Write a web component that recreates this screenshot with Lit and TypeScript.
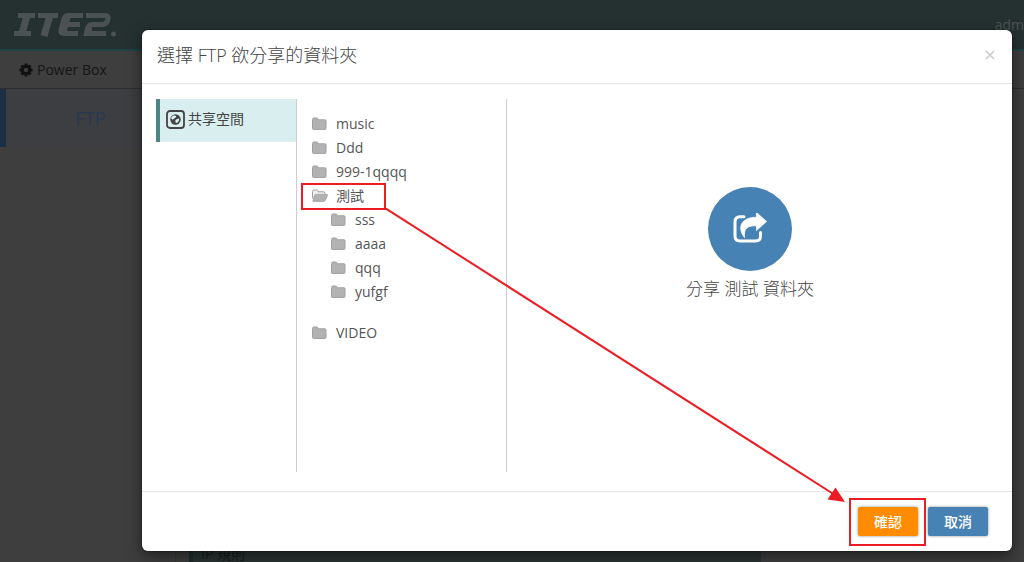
import { LitElement, html, css, svg, nothing } from "lit";
import { customElement, state } from "lit/decorators.js";
import { classMap } from "lit/directives/class-map.js";

interface Folder {
  name: string;
  children?: Folder[];
}

const FOLDERS: Folder[] = [
  { name: "music" },
  { name: "Ddd" },
  { name: "999-1qqqq" },
  {
    name: "測試",
    children: [{ name: "sss" }, { name: "aaaa" }, { name: "qqq" }, { name: "yufgf" }],
  },
  { name: "VIDEO" },
];

const closedFolder = svg`
  <path d="M0.5 3.5 Q0.5 2 2 2 H4.6 Q6 2 6 3.3 V3.8 H13 Q14 3.8 14 4.8 V12.4 Q14 13.4 13 13.4 H1.5 Q0.5 13.4 0.5 12.4 Z" fill="#b2b2b2" stroke="#a0a0a0"/>`;
const openFolder = svg`
  <path d="M0.5 10.5 V3.5 Q0.5 2 2 2 H4.6 Q6 2 6 3.3 V3.8 H11.8 Q12.8 3.8 12.8 4.8 V6" fill="#eee" stroke="#a0a0a0"/>
  <path d="M3.6 6.4 H15 Q16 6.4 15.5 7.4 L13.2 12.4 Q12.7 13.4 11.7 13.4 H1.6 Q0.6 13.4 1 12.4 L2.7 7.1 Q2.9 6.4 3.6 6.4 Z" fill="#b2b2b2" stroke="#a0a0a0" stroke-width="0.8"/>`;

@customElement("app-root")
export class AppRoot extends LitElement {
  @state() private selected = "測試";

  static styles = css`
    :host {
      display: block;
      position: relative;
      min-height: 100vh;
      overflow: hidden;
      background: #3e3e3e;
      color: #444;
      font-family: "Open Sans", "Noto Sans CJK TC", sans-serif;
      font-size: 14px;
    }
    * { box-sizing: border-box; }
    button {
      font: inherit;
      color: inherit;
      border: 0;
      background: none;
      padding: 0;
      cursor: pointer;
    }
    svg { display: block; flex: none; }
    .page {
      display: flex;
      flex-direction: column;
      height: 100vh;
    }
    .topbar {
      display: flex;
      justify-content: space-between;
      align-items: center;
      height: 51px;
      padding-left: 14px;
      background: #253131;
      border-bottom: 2px solid #1c4444;
    }
    .user {
      white-space: nowrap;
      color: #4c5252;
    }
    .crumbs {
      display: flex;
      align-items: center;
      gap: 4px;
      height: 38px;
      padding-left: 19px;
      border-bottom: 1px solid #2d2d2d;
      color: #151515;
    }
    .main { display: flex; flex: 1; }
    .nav {
      width: 176px;
      border-right: 1px solid #373737;
    }
    .nav-item {
      display: flex;
      align-items: center;
      justify-content: center;
      height: 58px;
      background: #3c3e41;
      border-left: 6px solid #1c2f43;
      color: #27394e;
      font-size: 18px;
      text-decoration: none;
    }
    .content {
      flex: 1;
      display: flex;
      align-items: flex-end;
      padding-left: 13px;
    }
    .rule {
      width: 572px;
      height: 20px;
      padding-left: 8px;
      border-left: 4px solid #1e2d2d;
      background: #2b3333;
      color: #161a1a;
      line-height: 24px;
    }
    .overlay {
      position: absolute;
      inset: 0;
      padding: 30px 12px 11px 142px;
    }
    .dialog {
      position: relative;
      display: flex;
      flex-direction: column;
      height: 100%;
      background: #fff;
      border-radius: 6px;
      box-shadow: 0 0 0 1px rgba(0, 0, 0, 0.2), 0 5px 15px rgba(0, 0, 0, 0.5);
    }
    .head {
      display: flex;
      justify-content: space-between;
      align-items: center;
      height: 54px;
      padding: 0 17px 4px 15px;
      border-bottom: 1px solid #e5e5e5;
    }
    .title {
      margin: 0;
      font-size: 18px;
      font-weight: 300;
      line-height: 26px;
    }
    .close { color: #ccc; }
    .body {
      display: flex;
      flex: 1;
      padding: 15px 15px 19px 14px;
    }
    .spaces {
      width: 141px;
      border-right: 1px solid #ccc;
    }
    .space {
      display: flex;
      align-items: center;
      gap: 3px;
      width: 100%;
      height: 43px;
      padding: 0 0 2px 6px;
      border-left: 4px solid #4b8786;
      background: #d9eeee;
    }
    .space-name { padding-bottom: 3px; }
    .tree {
      width: 210px;
      padding: 12px 0 0 15px;
      border-right: 1px solid #ccc;
      color: #555;
    }
    .list {
      list-style: none;
      margin: 0;
      padding: 0;
    }
    .nested { padding: 0 0 17px 19px; }
    .folder {
      position: relative;
      display: flex;
      align-items: center;
      gap: 7px;
      height: 24px;
      margin-bottom: 0;
    }
    .share {
      flex: 1;
      display: flex;
      flex-direction: column;
      align-items: center;
      padding: 88px 4px 0 0;
      font-size: 17px;
      font-weight: 300;
    }
    .circle {
      display: grid;
      place-items: center;
      width: 84px;
      height: 84px;
      border-radius: 50%;
      background: #4682b4;
    }
    .share-text { margin: 5px 0 0; line-height: 26px; }
    .foot {
      display: flex;
      justify-content: flex-end;
      gap: 10px;
      height: 60px;
      padding: 15px 24px 0 0;
      border-top: 1px solid #e5e5e5;
    }
    .btn {
      position: relative;
      width: 60px;
      height: 29px;
      padding-bottom: 2px;
      border-radius: 2px;
      background: #4682b4;
      color: #fff;
      font-weight: 500;
      box-shadow: 0 0 3px rgba(0, 0, 0, 0.45);
    }
    .confirm { background: #ff8c00; }
    .mark {
      position: absolute;
      border: 2px solid #ed1c24;
      pointer-events: none;
    }
    .mark-folder { left: -11px; top: 0; width: 85px; height: 27px; }
    .mark-confirm { left: -9px; top: -9px; width: 77px; height: 48px; }
    .arrow {
      position: absolute;
      left: 243px;
      top: 178px;
      pointer-events: none;
    }
  `;

  private renderFolder(folder: Folder): unknown {
    const open = !!folder.children;
    return html`<li>
      <button class="folder" @click=${() => (this.selected = folder.name)}>
        <svg width="17" height="14" viewBox="0 0 17 14">${open ? openFolder : closedFolder}</svg>
        <span>${folder.name}</span>
        ${open ? html`<span class="mark mark-folder"></span>` : nothing}
      </button>
      ${open
        ? html`<ul class="list nested">${folder.children!.map((c) => this.renderFolder(c))}</ul>`
        : nothing}
    </li>`;
  }

  render() {
    return html`
      <div class="page">
        <header class="topbar">
          <svg width="104" height="24" viewBox="0 0 104 24" role="img" aria-label="ITE2">
            <g fill="none" stroke="#4c5252">
              <path stroke-width="5" d="M4 2.500 H21 M0 20.500 H17 M24 2.500 H44 M69 2.500 H55 Q51 2.500 50 6 L47 17 Q46 20.500 50 20.500 H64 M49 11.500 H66 M72 2.500 H90 Q95 2.500 94 6 Q93 11.500 88 11.500 H78 Q75 11.500 74 15 L72.500 20.500 H92"/>
              <path stroke-width="7" d="M13 2.500 L8 20.500 M36 2.500 L30 23 M53 4 L49 19 M75 14 L73.500 20"/>
            </g>
            <circle cx="99.500" cy="21" r="2.500" fill="#4c5252"/>
          </svg>
          <span class="user">adm</span>
        </header>
        <div class="crumbs">
          <svg width="14" height="14" viewBox="0 0 14 14">
            <g stroke="#111" stroke-width="3">
              <path d="M7 0.500 V13.500 M0.500 7 H13.500 M2.500 2.500 L11.500 11.500 M11.500 2.500 L2.500 11.500"/>
            </g>
            <circle cx="7" cy="7" r="5" fill="#111"/>
            <circle cx="7" cy="7" r="2.200" fill="#3e3e3e"/>
          </svg>
          <span>Power Box</span>
        </div>
        <div class="main">
          <nav class="nav"><a class="nav-item" href="#ftp">FTP</a></nav>
          <div class="content"><div class="rule">IP 規則</div></div>
        </div>
      </div>

      <div class="overlay">
        <section class="dialog" role="dialog" aria-labelledby="title">
          <header class="head">
            <h1 class="title" id="title">選擇 FTP 欲分享的資料夾</h1>
            <button class="close" aria-label="關閉">
              <svg width="10" height="10" viewBox="0 0 10 10">
                <path d="M1 1 L9 9 M9 1 L1 9" stroke="currentColor" stroke-width="1.700"/>
              </svg>
            </button>
          </header>
          <div class="body">
            <div class="spaces">
              <button class="space">
                <svg width="19" height="19" viewBox="0 0 19 19">
                  <rect x="1" y="1" width="17" height="17" rx="3" fill="none" stroke="#444" stroke-width="1.800"/>
                  <circle cx="9.500" cy="9.500" r="5.200" fill="#444"/>
                  <path d="M5 8 Q5.800 6 8 5.200 L10 6 L10 7.300 L8.300 8.600 L6.500 9.800 Z M10.500 9.200 L13.200 8.600 Q13.600 11.500 11 13 L9.600 12.400 L9.300 10.300 Z" fill="#d9eeee"/>
                </svg>
                <span class="space-name">共享空間</span>
              </button>
            </div>
            <div class="tree">
              <ul class="list">${FOLDERS.map((f) => this.renderFolder(f))}</ul>
            </div>
            <div class="share">
              <div class="circle">
                <svg width="34" height="32" viewBox="0 0 34 32">
                  <path d="M11 3.800 H7 Q2 3.800 2 8.800 V23 Q2 28 7 28 H22.500 Q27.500 28 27.500 23 V19.500" fill="none" stroke="#fff" stroke-width="3" stroke-linecap="round"/>
                  <path d="M23.500 -0.500 L33.500 8.500 L23.500 17.500 V12.800 C15 12.500 10.500 15 11.500 24.500 C4 15 7.500 4.300 23.500 4.200 Z" fill="#fff" stroke="#fff" stroke-width="0.800" stroke-linejoin="round"/>
                </svg>
              </div>
              <p class="share-text">分享 ${this.selected} 資料夾</p>
            </div>
          </div>
          <footer class="foot">
            <button class=${classMap({ btn: true, confirm: true })}>
              確認<span class="mark mark-confirm"></span>
            </button>
            <button class="btn">取消</button>
          </footer>
          <svg class="arrow" width="462" height="296" viewBox="0 0 462 296">
            <path d="M0 0 L450 287" stroke="#ed1c24" stroke-width="2"/>
            <path d="M460 294 L442.500 291.500 L450.500 279.500 Z" fill="#ed1c24"/>
          </svg>
        </section>
      </div>
    `;
  }
}
